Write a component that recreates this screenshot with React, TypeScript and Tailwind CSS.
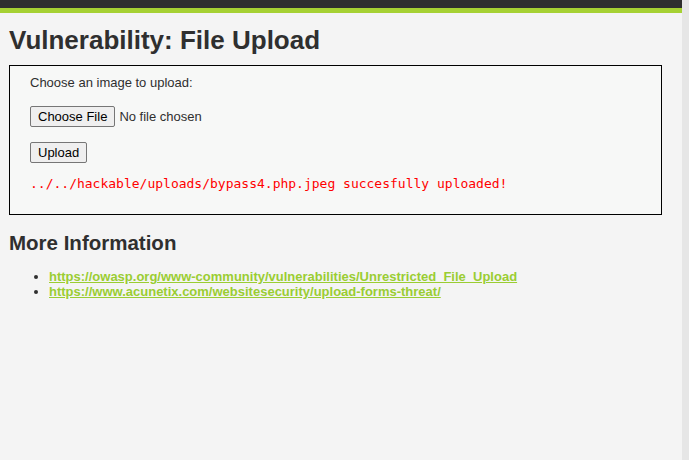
import React from 'react';

const links: string[] = [
    'https://owasp.org/www-community/vulnerabilities/Unrestricted_File_Upload',
    'https://www.acunetix.com/websitesecurity/upload-forms-threat/',
];

const App: React.FC = () => {
    return (
        <div className="flex h-[460px] w-[689px] overflow-hidden bg-[#f4f4f4] font-['Liberation_Sans',Arial,sans-serif] text-[#2f2f2f]">
            <div className="flex flex-1 flex-col">
                <div className="h-[8px] bg-[#2f2f2f]" />
                <div className="h-[5px] bg-[#a6d133]" />

                <div className="px-[9px]">
                    <h1 className="mt-[11px] text-[26px] leading-[32px] font-bold">Vulnerability: File Upload</h1>

                    <div className="mt-[9px] mr-[11px] h-[150px] border border-black bg-[#f7f8f7] pl-[20px] pt-[9px] text-[13px] text-[#2f2f2f]">
                        <p className="leading-[16px]">Choose an image to upload:</p>

                        <div className="mt-[15px] flex items-center">
                            <button className="h-[21px] rounded-[2px] border border-[#767676] bg-[#efefef] px-[7px] text-[13px] leading-[15px] text-black">
                                Choose File
                            </button>
                            <span className="ml-[4px] text-[13px]">No file chosen</span>
                        </div>

                        <button className="mt-[15px] h-[21px] rounded-[2px] border border-[#767676] bg-[#efefef] px-[7px] text-[13px] leading-[15px] text-black">
                            Upload
                        </button>

                        <pre className="mt-[13px] font-['DejaVu_Sans_Mono',monospace] text-[13px] leading-[16px] text-[#ff0000]">
                            ../../hackable/uploads/bypass4.php.jpeg succesfully uploaded!
                        </pre>
                    </div>

                    <h2 className="mt-[15px] text-[20.5px] leading-[26px] font-bold">More Information</h2>

                    <ul className="mt-[13px] list-disc pl-[40px] text-[13px] leading-[15px]">
                        {links.map((href) => (
                            <li key={href} className="text-[#2f2f2f]">
                                <a href={href} className="font-bold text-[#9acd32] underline">
                                    {href}
                                </a>
                            </li>
                        ))}
                    </ul>
                </div>
            </div>
            <div className="w-[7px] bg-[#e6e6e6]" />
        </div>
    );
};

export default App;
